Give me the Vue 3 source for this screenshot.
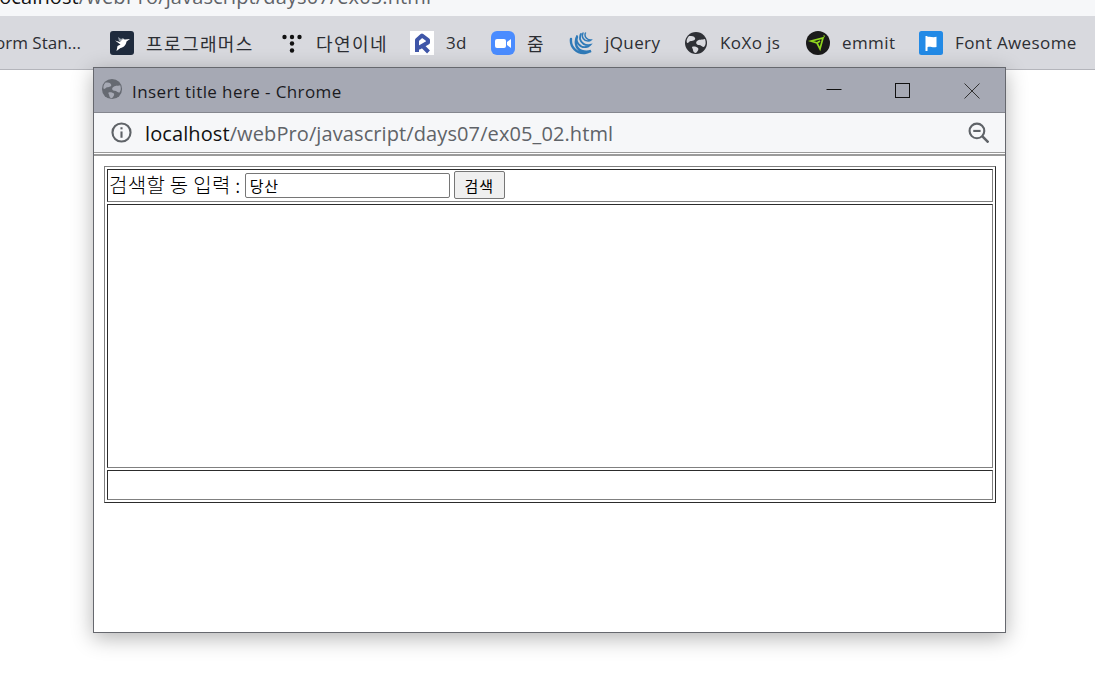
<script setup>
const bookmarks = [
  { label: 'orm Stan...', icon: null },
  { label: '프로그래머스', icon: 'prog', ko: true },
  { label: '다연이네', icon: 'dots', ko: true },
  { label: '3d', icon: 'r' },
  { label: '줌', icon: 'zoom', ko: true },
  { label: 'jQuery', icon: 'jq' },
  { label: 'KoXo js', icon: 'globe' },
  { label: 'emmit', icon: 'emmit' },
  { label: 'Font Awesome', icon: 'fa' },
]
</script>

<template>
  <div class="screen">
    <div class="topbar"><span class="topurl"><b>localhost</b>/webPro/javascript/days07/ex05.html</span></div>
    <div class="bookmarks">
      <div v-for="b in bookmarks" :key="b.label" class="bm" :class="b.icon ? 'bm-' + b.icon : 'bm-first'">
        <svg v-if="b.icon === 'prog'" class="ico" viewBox="0 0 24 24">
          <rect width="24" height="24" rx="3" fill="#1f2b3d"/>
          <path d="M9 10L8 6l3 2 2-1 1 1-3 3z" fill="#9aa3ad"/>
          <path d="M5 9.500l5 1.500 3-3 2 .5 5-.5-3.500 2.500c-.5 3.500-3 6-6 6.500L6.500 20l1-5 3-1.500z" fill="#fff"/>
        </svg>
        <svg v-else-if="b.icon === 'dots'" class="ico" viewBox="0 0 24 24">
          <circle cx="4.500" cy="6" r="2.200" fill="#111"/><circle cx="12" cy="6" r="2.200" fill="#111"/><circle cx="19.500" cy="6" r="2.200" fill="#111"/>
          <circle cx="12" cy="12.500" r="2.200" fill="#111"/><circle cx="12" cy="19.500" r="2.200" fill="#111"/>
        </svg>
        <svg v-else-if="b.icon === 'r'" class="ico" viewBox="0 0 24 24">
          <rect width="24" height="24" fill="#fff"/>
          <path d="M7 21V9L12 4.500 18 9v2.500L8.500 17M11.500 14l7 7" fill="none" stroke="#3f56a8" stroke-width="4" stroke-linejoin="round"/>
        </svg>
        <svg v-else-if="b.icon === 'zoom'" class="ico" viewBox="0 0 24 24">
          <rect width="24" height="24" rx="6" fill="#4a8cff"/>
          <rect x="4" y="8" width="11" height="9" rx="2" fill="#fff"/>
          <path d="M16 11l4-3v9l-4-3z" fill="#fff"/>
        </svg>
        <svg v-else-if="b.icon === 'jq'" class="ico" viewBox="0 0 24 24" fill="none" stroke="#2f7ab8" stroke-linecap="round">
          <path d="M2 8c-1 8 6 15 14 14 2 0 4-1 6-2-6 2-14 0-15-7-.5-3 0-5 1-7" stroke-width="2.400"/>
          <path d="M8 5c-2 6 3 12 9 11 2 0 3-1 4-2-5 1-9-2-10-6 0-2 0-4 1-5" stroke-width="1.800"/>
          <path d="M14 2c-2 4 1 8 5 8 1 0 2 0 3-1-4 0-6-3-6-5 0-1 0-2 .5-2" stroke-width="1.500"/>
        </svg>
        <svg v-else-if="b.icon === 'globe'" class="ico" viewBox="0 0 24 24">
          <circle cx="12" cy="12" r="11" fill="#2f3136"/>
          <path d="M5 5c3 0 5 0 6 2s-2 3-4 3-2 2-4 2c-1-2 0-5 2-7zM21 8c1 3 1 6-1 8-2 0-3-2-5-2s-4-2-2-4 5-1 8-2zM8 16c2-1 5 0 6 1s0 3-2 5c-2 0-3-2-3-3s-1-2-1-3z" fill="#d8d9de"/>
        </svg>
        <svg v-else-if="b.icon === 'emmit'" class="ico" viewBox="0 0 24 24">
          <circle cx="12" cy="12" r="12" fill="#1a1a1a"/>
          <path d="M5 10l12-3-3 11-3-6zM11 12l3-2" fill="none" stroke="#8fd61e" stroke-width="1.700" stroke-linejoin="miter"/>
          <path d="M17 4.500l2 0-.5 2z" fill="#8fd61e"/>
        </svg>
        <svg v-else-if="b.icon === 'fa'" class="ico" viewBox="0 0 24 24">
          <rect width="24" height="24" rx="2.500" fill="#228ae6"/>
          <path d="M6.500 5h2v1c3-1 5 1 9-.3V16c-4 1.200-6-1-9 .2V20h-2z" fill="#fff"/>
        </svg>
        <span class="bm-label" :class="{ ko: b.ko, plain: !b.icon }">{{ b.label }}</span>
      </div>
    </div>

    <section class="window">
      <header class="titlebar">
        <svg class="winglobe" viewBox="0 0 24 24">
          <circle cx="12" cy="12" r="11" fill="#666a72"/>
          <path d="M5 5c3 0 5 0 6 2s-2 3-4 3-2 2-4 2c-1-2 0-5 2-7zM21 8c1 3 1 6-1 8-2 0-3-2-5-2s-4-2-2-4 5-1 8-2zM8 16c2-1 5 0 6 1s0 3-2 5c-2 0-3-2-3-3s-1-2-1-3z" fill="#a6a9b4"/>
        </svg>
        <span class="wintitle">Insert title here - Chrome</span>
        <div class="controls">
          <svg class="ctl" viewBox="0 0 16 16"><path d="M0.500 6.500h15" stroke="#111" fill="none"/></svg>
          <svg class="ctl" viewBox="0 0 16 16"><rect x=".5" y=".5" width="14" height="14" stroke="#111" fill="none"/></svg>
          <svg class="ctl" viewBox="0 0 16 16"><path d="M.5 .5l15 15M15.500 .5l-15 15" stroke="#333" fill="none"/></svg>
        </div>
      </header>
      <div class="addrbar">
        <svg class="info" viewBox="0 0 20 20" fill="none" stroke="#5f6368" stroke-width="2">
          <circle cx="10" cy="10" r="8.600"/><path d="M10 9v6"/><path d="M10 5v2"/>
        </svg>
        <span class="url"><b>localhost</b>/webPro/javascript/days07/ex05_02.html</span>
        <svg class="zoomout" viewBox="0 0 20 20" fill="none" stroke="#5f6368" stroke-width="2">
          <circle cx="8.500" cy="8.500" r="7"/><path d="M5 8.500h7"/><path d="M13.500 13.500l6 6" stroke-width="2.400"/>
        </svg>
      </div>
      <div class="page">
        <table class="tbl" border="1">
          <tbody>
            <tr class="r1">
              <td>
                <div class="search">
                  <label class="lbl">검색할 동 입력 :</label>
                  <input class="inp" type="text" value="당산" />
                  <button class="btn" type="button">검색</button>
                </div>
              </td>
            </tr>
            <tr class="r2"><td></td></tr>
            <tr class="r3"><td></td></tr>
          </tbody>
        </table>
      </div>
    </section>
  </div>
</template>

<style>
html, body { margin: 0; background: #fff; }
</style>

<style scoped>
.screen {
  position: relative;
  width: 1095px;
  height: 687px;
  overflow: hidden;
  background: #fff;
  font-family: "Open Sans", "Noto Sans CJK KR", sans-serif;
}
.topbar {
  height: 16px;
  background: #f6f7f9;
  overflow: hidden;
}
.topurl {
  display: block;
  margin: -17px 0 0 -6px;
  font-size: 20px;
  line-height: 28px;
  letter-spacing: .12px;
  color: #5f6368;
  white-space: nowrap;
}
.topurl b, .url b { font-weight: 400; color: #111; }
.bookmarks {
  height: 54px;
  box-sizing: border-box;
  background: #d8d9de;
  border-bottom: 1px solid #b4b5bb;
  display: flex;
  align-items: center;
  font-size: 17px;
  color: #2c2e33;
  white-space: nowrap;
}
.bm { display: flex; align-items: center; gap: 12px; flex: none; }
.bm-label { line-height: 24px; letter-spacing: .4px; }
.bm-label.plain { letter-spacing: 0; }
.bm-label.ko {
  font-family: "Noto Sans CJK KR", sans-serif;
  font-size: 18px;
  letter-spacing: 1.400px;
  font-weight: 400;
}
.ico { width: 24px; height: 24px; flex: none; display: block; }
.bm-first { margin-left: -5px; width: 115px; }
.bm-prog { width: 170px; }
.bm-dots { width: 130px; }
.bm-r { width: 81px; }
.bm-zoom { width: 78px; }
.bm-jq { width: 115px; }
.bm-globe { width: 122px; }
.bm-emmit { width: 113px; }
.window {
  position: absolute;
  left: 93px;
  top: 67px;
  width: 913px;
  height: 566px;
  box-sizing: border-box;
  border: 1px solid #66686e;
  background: #fff;
  box-shadow: 0 5px 20px rgba(0, 0, 0, 0.3);
  display: flex;
  flex-direction: column;
}
.titlebar {
  height: 45px;
  flex: none;
  box-sizing: border-box;
  background: #a6a9b4;
  border-bottom: 1px solid #85878f;
  display: flex;
  align-items: center;
  padding-left: 7px;
  color: #1b1b1f;
}
.winglobe { width: 22px; height: 22px; flex: none; margin-bottom: 3px; }
.wintitle { margin: 2px 0 0 9px; font-size: 17px; letter-spacing: .4px; }
.controls { margin-left: auto; display: flex; gap: 53px; margin-right: 25px; margin-top: 1px; }
.ctl { width: 16px; height: 16px; display: block; }
.addrbar {
  height: 40px;
  flex: none;
  box-sizing: border-box;
  background: #f6f7f9;
  border-bottom: 1px solid #9b9b9b;
  display: flex;
  align-items: center;
  padding: 0 16px 0 17px;
}
.info { width: 21px; height: 21px; flex: none; }
.url { margin: 2px 0 0 13px; font-size: 20px; letter-spacing: .1px; color: #5f6368; white-space: nowrap; }
.zoomout { width: 21px; height: 21px; margin-left: auto; }
.page {
  flex: 1;
  border-top: 2px solid #9b9b9b;
  margin-top: 1px;
  padding: 10px 10px 0;
}
.tbl {
  width: 892px;
  border-spacing: 2px;
  box-sizing: border-box;
}
.tbl td { padding: 1px; }
.r2 td { height: 260px; }
.r3 td { height: 26px; }
.search { display: flex; align-items: center; gap: 4px; height: 29px; }
.lbl { margin-top: -3px; font-size: 20px; letter-spacing: .3px; color: #000; font-family: "Noto Sans CJK KR", sans-serif; font-weight: 300; }
.inp {
  width: 205px;
  height: 25px;
  box-sizing: border-box;
  border: 1px solid #767676;
  border-radius: 2px;
  padding: 1px 4px;
  font: 400 15px "Noto Sans CJK KR", sans-serif;
  letter-spacing: .8px;
  color: #000;
}
.btn {
  align-self: flex-start;
  width: 51px;
  height: 28px;
  box-sizing: border-box;
  border: 1px solid #767676;
  border-radius: 2px;
  background: #efefef;
  font: 400 15px "Noto Sans CJK KR", sans-serif;
  letter-spacing: .8px;
  color: #000;
  padding: 0;
}
</style>
